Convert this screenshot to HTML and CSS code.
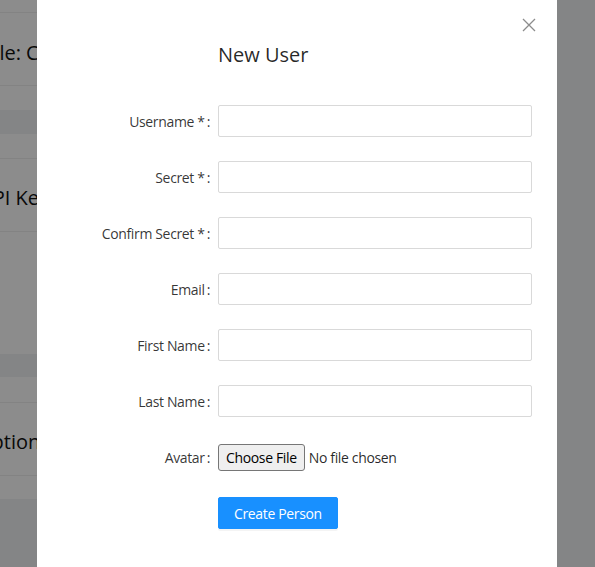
FILE: index.html
```html
<!DOCTYPE html>
<html lang="en">
<head>
<meta charset="utf-8">
<title>New User</title>
<link rel="stylesheet" href="styles.css">
</head>
<body>
<div class="page">
  <section class="card card-1">
    <div class="card-top"></div>
    <div class="card-head"><h3 class="card-title t-1">Role: Creator</h3></div>
    <div class="card-body"></div>
  </section>
  <section class="card card-2">
    <div class="card-top"></div>
    <div class="card-head"><h3 class="card-title t-2">API Keys</h3></div>
    <div class="card-body"></div>
  </section>
  <section class="card card-3">
    <div class="card-top"></div>
    <div class="card-head"><h3 class="card-title t-3">Options</h3></div>
    <div class="card-body"></div>
  </section>
</div>
<div class="mask"></div>
<div class="modal">
  <button class="close" aria-label="Close">
    <svg width="14" height="14" viewBox="0 0 14 14"><path d="M1 1 L13 13 M13 1 L1 13" stroke="#8c8c8c" stroke-width="1.3" fill="none"/></svg>
  </button>
  <div class="modal-body">
    <h2 class="title">New User</h2>
    <form class="form">
      <div class="row"><label class="label">Username *</label><input class="input" type="text"></div>
      <div class="row"><label class="label">Secret *</label><input class="input" type="password"></div>
      <div class="row"><label class="label">Confirm Secret *</label><input class="input" type="password"></div>
      <div class="row"><label class="label">Email</label><input class="input" type="text"></div>
      <div class="row"><label class="label">First Name</label><input class="input" type="text"></div>
      <div class="row"><label class="label">Last Name</label><input class="input" type="text"></div>
      <div class="row"><label class="label">Avatar</label><input class="file" type="file"></div>
      <div class="row"><span></span><div><button class="btn" type="button">Create Person</button></div></div>
    </form>
  </div>
</div>
</body>
</html>
```
FILE: styles.css
```css
html, body {
  margin: 0;
  padding: 0;
  height: 100%;
  overflow: hidden;
}
body {
  background: #f0f2f5;
  font-family: "Open Sans", "Noto Sans", sans-serif;
  font-size: 14px;
  color: rgba(0, 0, 0, 0.85);
}
.page {
  width: 557px;
}
.card {
  background: #fff;
}
.card-top {
  border-bottom: 1px solid #eeeeee;
}
.card-1 .card-top { height: 12px; }
.card-2 .card-top { height: 24px; }
.card-3 .card-top { height: 25px; }
.card-head {
  height: 72px;
  border-bottom: 1px solid #eeeeee;
  display: flex;
  align-items: center;
}
.card-title {
  margin: 0;
  font-size: 20px;
  font-weight: 400;
  color: #111;
  white-space: nowrap;
}
.t-1 { margin-left: -25px; padding-top: 7px; }
.t-2 { margin-left: -20px; padding-top: 4px; }
.t-3 { margin-left: -24px; padding-top: 4px; }
.card-1 .card-body { height: 24px; margin-bottom: 24px; }
.card-2 .card-body { height: 122px; margin-bottom: 23px; }
.card-3 .card-body { height: 23px; }

.mask {
  position: fixed;
  inset: 0;
  background: rgba(0, 0, 0, 0.45);
}
.modal {
  position: fixed;
  left: 37px;
  top: 0;
  width: 520px;
  height: 600px;
  background: #fff;
}
.close {
  position: absolute;
  top: 18px;
  right: 21px;
  width: 14px;
  height: 14px;
  padding: 0;
  border: 0;
  background: none;
  cursor: pointer;
  display: flex;
}
.modal-body {
  padding: 41px 24px 24px;
}
.title {
  margin: 0 0 36px 157px;
  font-size: 20px;
  line-height: 28px;
  font-weight: 400;
  color: rgba(0, 0, 0, 0.85);
}
.form {
  display: flex;
  flex-direction: column;
  gap: 24px;
  letter-spacing: -0.35px;
}
.row {
  display: grid;
  grid-template-columns: 157px 314px;
  align-items: center;
  height: 32px;
}
.label {
  text-align: right;
  white-space: nowrap;
  color: rgba(0, 0, 0, 0.8);
}
.label::after {
  content: ":";
  margin: 0 8px 0 2px;
}
.input {
  box-sizing: border-box;
  height: 32px;
  width: 314px;
  border: 1px solid #d9d9d9;
  border-radius: 2px;
  padding: 4px 11px;
  font: inherit;
  outline: none;
}
.file {
  font: inherit;
  font-size: 14px;
  letter-spacing: -0.35px;
  color: rgba(0, 0, 0, 0.85);
}
.file::file-selector-button {
  font: inherit;
  letter-spacing: -0.35px;
  height: 27px;
  padding: 0 7px;
  margin-right: 4px;
  border: 1px solid #767676;
  border-radius: 3px;
  background: #efefef;
  color: #000;
}
.btn {
  height: 32px;
  padding: 4px 15px;
  border: 1px solid #1890ff;
  border-radius: 2px;
  background: #1890ff;
  color: #fff;
  font: inherit;
  letter-spacing: -0.35px;
  box-shadow: 0 2px 0 rgba(0, 0, 0, 0.045);
}
```
